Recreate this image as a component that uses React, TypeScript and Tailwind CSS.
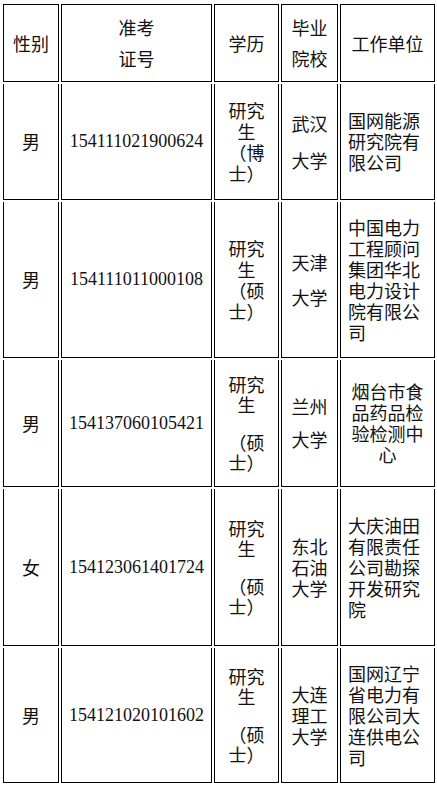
import React from "react";

type Cell = { lines: string[]; lh: number };

const cjk = '"Noto Sans CJK SC", "Noto Sans", sans-serif';

type Row = {
  h: string;
  sex: string;
  id: string;
  split: boolean;
  school: string[];
  schoolLh: string;
  unit: string[];
  center?: boolean;
};

const rows: Row[] = [
  {
    h: "h-[116px]",
    sex: "男",
    id: "154111021900624",
    split: false,
    school: ["武汉", "大学"],
    schoolLh: "leading-[37px]",
    unit: ["国网能源", "研究院有", "限公司"],
  },
  {
    h: "h-[156px]",
    sex: "男",
    id: "154111011000108",
    split: false,
    school: ["天津", "大学"],
    schoolLh: "leading-[35px]",
    unit: ["中国电力", "工程顾问", "集团华北", "电力设计", "院有限公", "司"],
  },
  {
    h: "h-[127px]",
    sex: "男",
    id: "154137060105421",
    split: true,
    school: ["兰州", "大学"],
    schoolLh: "leading-[33px]",
    unit: ["烟台市食", "品药品检", "验检测中", "心"],
    center: true,
  },
  {
    h: "h-[157px]",
    sex: "女",
    id: "154123061401724",
    split: true,
    school: ["东北", "石油", "大学"],
    schoolLh: "leading-[21px]",
    unit: ["大庆油田", "有限责任", "公司勘探", "开发研究", "院"],
  },
  {
    h: "h-[135px]",
    sex: "男",
    id: "154121020101602",
    split: true,
    school: ["大连", "理工", "大学"],
    schoolLh: "leading-[21px]",
    unit: ["国网辽宁", "省电力有", "限公司大", "连供电公", "司"],
  },
];

function Lines({ lines, cls }: { lines: string[]; cls: string }) {
  return (
    <div className={cls}>
      {lines.map((l, i) => (
        <div key={i} className="whitespace-nowrap">
          {l}
        </div>
      ))}
    </div>
  );
}

export default function App() {
  const th =
    "border border-black p-0 align-middle text-center font-normal text-[18px] text-[#111]";
  const td =
    "border-x border-b border-black p-0 align-middle text-[18px] text-[#111]";
  return (
    <div className="pt-[2px] pl-px bg-white" style={{ fontFamily: cjk }}>
      <table className="table-fixed border-separate border-spacing-[2px] w-[436px]">
        <thead>
          <tr className="h-[78px]">
            <th className={`${th} w-[56px]`}>性别</th>
            <th className={`${th} w-[151px]`}>
              <Lines lines={["准考", "证号"]} cls="leading-[31px]" />
            </th>
            <th className={`${th} w-[65px]`}>学历</th>
            <th className={`${th} w-[57px]`}>
              <Lines lines={["毕业", "院校"]} cls="leading-[31px]" />
            </th>
            <th className={`${th} w-[95px]`}>工作单位</th>
          </tr>
        </thead>
        <tbody>
          {rows.map((r, i) => (
            <tr key={i} className={r.h}>
              <td className={`${td} text-center`}>{r.sex}</td>
              <td
                className={`${td} text-center text-[18.67px]`}
                style={{ fontFamily: '"Liberation Serif", "Times New Roman", serif' }}
              >
                {r.id}
              </td>
              <td className={`${td} text-center`}>
                {r.split ? (
                  <div>
                    <Lines lines={["研究", "生"]} cls="leading-[20px]" />
                    <Lines lines={["（硕", "士）"]} cls="leading-[20px] mt-[18px]" />
                  </div>
                ) : (
                  <Lines
                    lines={["研究", "生", i === 0 ? "（博" : "（硕", "士）"]}
                    cls="leading-[21px]"
                  />
                )}
              </td>
              <td className={`${td} text-center`}>
                <Lines lines={r.school} cls={r.schoolLh} />
              </td>
              <td className={`${td} ${r.center ? "text-center" : "text-left pl-[7px]"}`}>
                <Lines lines={r.unit} cls="leading-[21px]" />
              </td>
            </tr>
          ))}
        </tbody>
      </table>
    </div>
  );
}
